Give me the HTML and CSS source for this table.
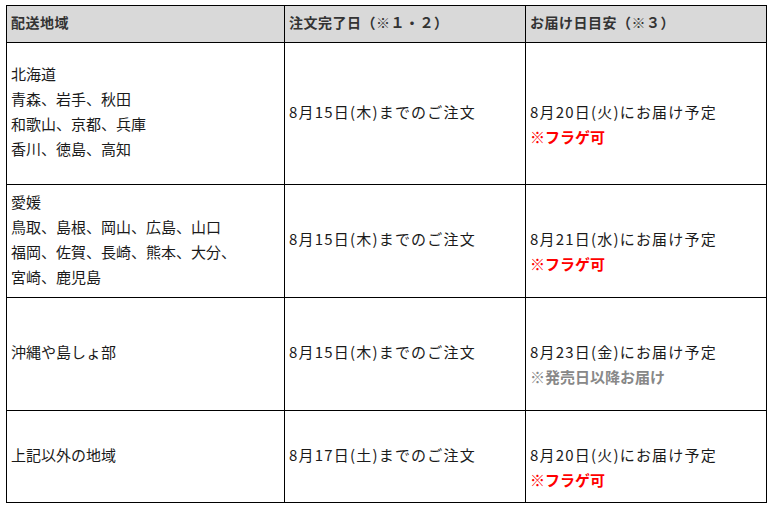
FILE: index.html
```html
<!DOCTYPE html>
<html lang="ja">
<head>
<meta charset="utf-8">
<link rel="stylesheet" href="styles.css">
</head>
<body>
<div class="wrap">
<table class="ship">
  <colgroup>
    <col class="c1"><col class="c2"><col class="c3">
  </colgroup>
  <thead>
    <tr class="head">
      <th>配送地域</th>
      <th>注文完了日（※１・２）</th>
      <th>お届け日目安（※３）</th>
    </tr>
  </thead>
  <tbody>
    <tr class="r1">
      <td class="area">北海道<br>青森、岩手、秋田<br>和歌山、京都、兵庫<br>香川、徳島、高知</td>
      <td><span class="date">8月15日(木)までのご注文</span></td>
      <td><div class="deliv"><span class="date">8月20日(火)にお届け予定</span><br><span class="red">※フラゲ可</span></div></td>
    </tr>
    <tr class="r2">
      <td class="area">愛媛<br>鳥取、島根、岡山、広島、山口<br>福岡、佐賀、長崎、熊本、大分、<br>宮崎、鹿児島</td>
      <td><span class="date">8月15日(木)までのご注文</span></td>
      <td><div class="deliv"><span class="date">8月21日(水)にお届け予定</span><br><span class="red">※フラゲ可</span></div></td>
    </tr>
    <tr class="r3">
      <td class="area">沖縄や島しょ部</td>
      <td><span class="date">8月15日(木)までのご注文</span></td>
      <td><div class="deliv"><span class="date">8月23日(金)にお届け予定</span><br><span class="gray">※発売日以降お届け</span></div></td>
    </tr>
    <tr class="r4">
      <td class="area">上記以外の地域</td>
      <td><span class="date">8月17日(土)までのご注文</span></td>
      <td><div class="deliv"><span class="date">8月20日(火)にお届け予定</span><br><span class="red">※フラゲ可</span></div></td>
    </tr>
  </tbody>
</table>
</div>
</body>
</html>
```

FILE: styles.css
```css
html, body {
  margin: 0;
  padding: 0;
  background: #fff;
}
.wrap {
  padding: 5px 6px;
}
.ship {
  border-collapse: collapse;
  width: 761px;
  table-layout: fixed;
  font-family: "Noto Sans CJK JP", "Noto Sans", sans-serif;
  font-size: 15px;
  color: #1a1a1a;
}
.c1 { width: 278px; }
.c2 { width: 241px; }
.c3 { width: 241px; }
.ship th, .ship td {
  border: 1px solid #000;
  padding: 0 4px 5px 4px;
  text-align: left;
  vertical-align: middle;
  line-height: 25px;
}
.ship th {
  background: #d9d9d9;
  font-weight: bold;
  font-size: 14px;
  letter-spacing: 0.5px;
  color: #333;
  height: 32px;
  padding-bottom: 4px;
}
.r1 td { height: 136px; }
.r2 td, .r3 td { height: 107px; }
.r4 td { height: 86px; }
.date {
  letter-spacing: 1.2px;
}
.deliv {
  padding-top: 25px;
}
.red {
  color: #ff0000;
  font-weight: bold;
}
.gray {
  color: #888;
  font-weight: bold;
}
```
